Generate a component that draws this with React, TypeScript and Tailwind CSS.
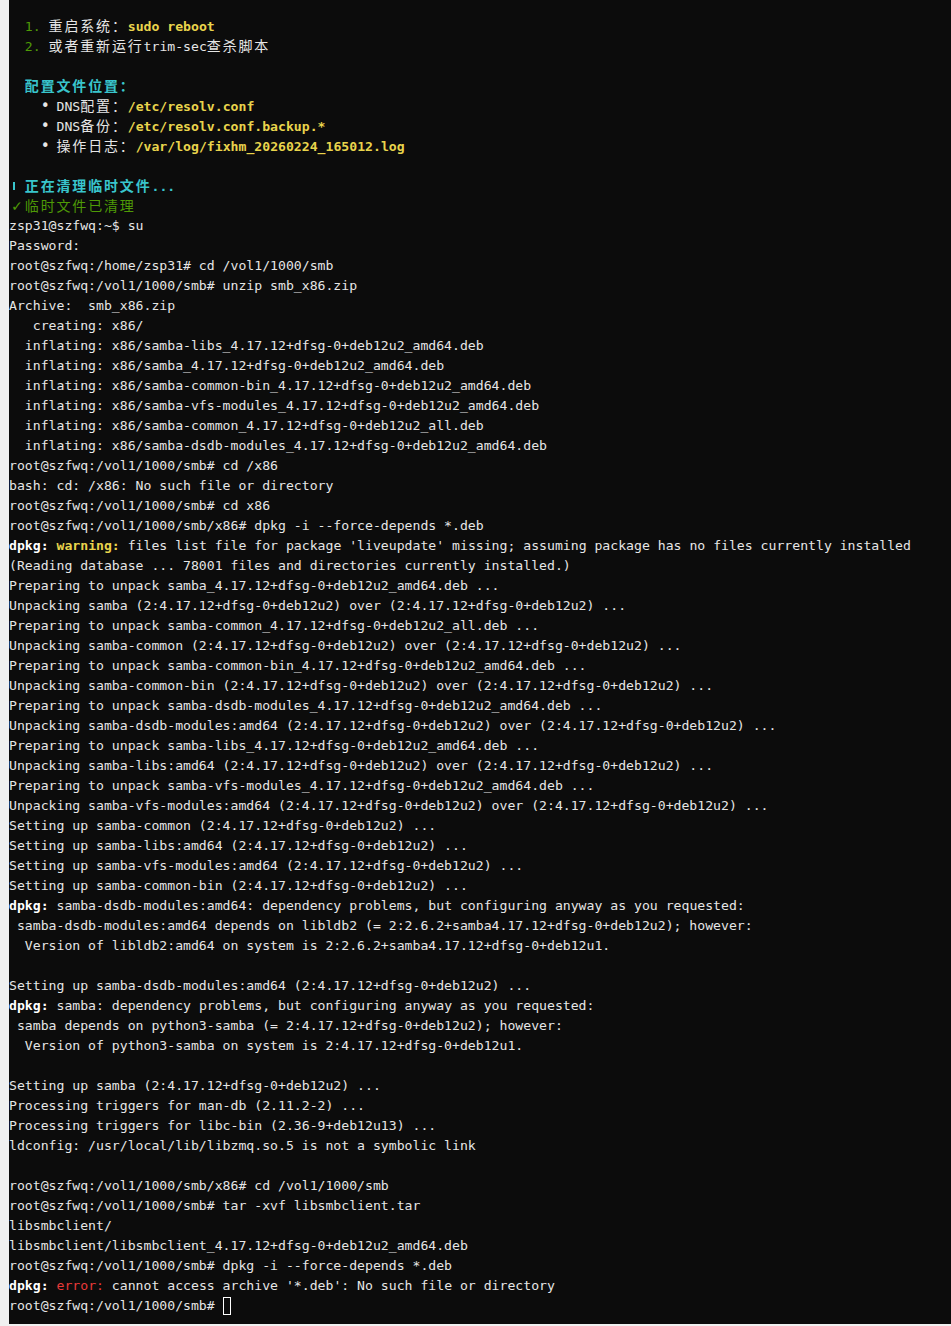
import React from 'react'

type Seg = [string, keyof typeof TONES] | string

const TONES = {
  n: '',
  g: 'text-[#4e9a06]',
  gk: 'text-[#4e9a06] text-[16px]',
  b: 'text-[15px]',
  y: 'font-bold text-[#e9d44c]',
  c: 'font-bold text-[#39c5cc]',
  w: 'font-bold text-white',
  r: 'text-[#e83a3a]',
  spin: '',
}

const V = '2:4.17.12+dfsg-0+deb12u2'

const LINES: Seg[][] = [
  ['  ', ['1.', 'g'], ' 重启系统：', ['sudo reboot', 'y']],
  ['  ', ['2.', 'g'], ' 或者重新运行trim-sec查杀脚本'],
  [],
  ['  ', ['配置文件位置：', 'c']],
  ['    ', ['•', 'b'], ' DNS配置：', ['/etc/resolv.conf', 'y']],
  ['    ', ['•', 'b'], ' DNS备份：', ['/etc/resolv.conf.backup.*', 'y']],
  ['    ', ['•', 'b'], ' 操作日志：', ['/var/log/fixhm_20260224_165012.log', 'y']],
  [],
  [['', 'spin'], ' ', ['正在清理临时文件...', 'c']],
  [['✓', 'gk'], ['临时文件已清理', 'g']],
  ['zsp31@szfwq:~$ su'],
  ['Password:'],
  ['root@szfwq:/home/zsp31# cd /vol1/1000/smb'],
  ['root@szfwq:/vol1/1000/smb# unzip smb_x86.zip'],
  ['Archive:  smb_x86.zip'],
  ['   creating: x86/'],
  ['  inflating: x86/samba-libs_4.17.12+dfsg-0+deb12u2_amd64.deb'],
  ['  inflating: x86/samba_4.17.12+dfsg-0+deb12u2_amd64.deb'],
  ['  inflating: x86/samba-common-bin_4.17.12+dfsg-0+deb12u2_amd64.deb'],
  ['  inflating: x86/samba-vfs-modules_4.17.12+dfsg-0+deb12u2_amd64.deb'],
  ['  inflating: x86/samba-common_4.17.12+dfsg-0+deb12u2_all.deb'],
  ['  inflating: x86/samba-dsdb-modules_4.17.12+dfsg-0+deb12u2_amd64.deb'],
  ['root@szfwq:/vol1/1000/smb# cd /x86'],
  ['bash: cd: /x86: No such file or directory'],
  ['root@szfwq:/vol1/1000/smb# cd x86'],
  ['root@szfwq:/vol1/1000/smb/x86# dpkg -i --force-depends *.deb'],
  [
    ['dpkg:', 'w'],
    ' ',
    ['warning:', 'y'],
    " files list file for package 'liveupdate' missing; assuming package has no files currently installed",
  ],
  ['(Reading database ... 78001 files and directories currently installed.)'],
  ['Preparing to unpack samba_4.17.12+dfsg-0+deb12u2_amd64.deb ...'],
  [`Unpacking samba (${V}) over (${V}) ...`],
  ['Preparing to unpack samba-common_4.17.12+dfsg-0+deb12u2_all.deb ...'],
  [`Unpacking samba-common (${V}) over (${V}) ...`],
  ['Preparing to unpack samba-common-bin_4.17.12+dfsg-0+deb12u2_amd64.deb ...'],
  [`Unpacking samba-common-bin (${V}) over (${V}) ...`],
  ['Preparing to unpack samba-dsdb-modules_4.17.12+dfsg-0+deb12u2_amd64.deb ...'],
  [`Unpacking samba-dsdb-modules:amd64 (${V}) over (${V}) ...`],
  ['Preparing to unpack samba-libs_4.17.12+dfsg-0+deb12u2_amd64.deb ...'],
  [`Unpacking samba-libs:amd64 (${V}) over (${V}) ...`],
  ['Preparing to unpack samba-vfs-modules_4.17.12+dfsg-0+deb12u2_amd64.deb ...'],
  [`Unpacking samba-vfs-modules:amd64 (${V}) over (${V}) ...`],
  [`Setting up samba-common (${V}) ...`],
  [`Setting up samba-libs:amd64 (${V}) ...`],
  [`Setting up samba-vfs-modules:amd64 (${V}) ...`],
  [`Setting up samba-common-bin (${V}) ...`],
  [['dpkg:', 'w'], ' samba-dsdb-modules:amd64: dependency problems, but configuring anyway as you requested:'],
  [' samba-dsdb-modules:amd64 depends on libldb2 (= 2:2.6.2+samba4.17.12+dfsg-0+deb12u2); however:'],
  ['  Version of libldb2:amd64 on system is 2:2.6.2+samba4.17.12+dfsg-0+deb12u1.'],
  [],
  [`Setting up samba-dsdb-modules:amd64 (${V}) ...`],
  [['dpkg:', 'w'], ' samba: dependency problems, but configuring anyway as you requested:'],
  [` samba depends on python3-samba (= ${V}); however:`],
  ['  Version of python3-samba on system is 2:4.17.12+dfsg-0+deb12u1.'],
  [],
  [`Setting up samba (${V}) ...`],
  ['Processing triggers for man-db (2.11.2-2) ...'],
  ['Processing triggers for libc-bin (2.36-9+deb12u13) ...'],
  ['ldconfig: /usr/local/lib/libzmq.so.5 is not a symbolic link'],
  [],
  ['root@szfwq:/vol1/1000/smb/x86# cd /vol1/1000/smb'],
  ['root@szfwq:/vol1/1000/smb# tar -xvf libsmbclient.tar'],
  ['libsmbclient/'],
  ['libsmbclient/libsmbclient_4.17.12+dfsg-0+deb12u2_amd64.deb'],
  ['root@szfwq:/vol1/1000/smb# dpkg -i --force-depends *.deb'],
  [['dpkg:', 'w'], ' ', ['error:', 'r'], " cannot access archive '*.deb': No such file or directory"],
]

// CJK glyphs take two terminal cells
function Cells({ text }: { text: string }) {
  const parts = text.split(/([\u3000-\u9fff\uff00-\uffef]+)/)
  return (
    <>
      {parts.map((p, i) =>
        i % 2 === 1 ? (
          <span key={i} className="text-[14px] tracking-[1.83px]">
            {p}
          </span>
        ) : (
          p
        ),
      )}
    </>
  )
}

function Line({ segs }: { segs: Seg[] }) {
  return (
    <div className="h-5 whitespace-pre overflow-hidden">
      {segs.map((s, i) => {
        if (typeof s === 'string') return <Cells key={i} text={s} />
        const [text, tone] = s
        if (tone === 'spin')
          return (
            <span key={i} className="inline-block w-[7.92px] h-5 align-top">
              <span className="block mt-[6px] ml-[4px] w-[2px] h-[8px] bg-[#39c5cc]" />
            </span>
          )
        if (tone === 'gk' || tone === 'b')
          return (
            <span key={i} className={`inline-block text-center align-top ${tone === 'gk' ? 'w-[15.83px]' : 'w-[7.92px]'} ${TONES[tone]}`}>
              {text}
            </span>
          )
        return (
          <span key={i} className={TONES[tone]}>
            <Cells text={text} />
          </span>
        )
      })}
    </div>
  )
}

export default function App() {
  return (
    <div className="w-[951px] h-[1326px] bg-[#f0f0f0] pl-[9px] pb-[2px]">
      <div
        className="h-full bg-[#0c0c0c] pt-[16px] text-[13.15px] leading-5 text-[#e6e6e6]"
        style={{ fontFamily: '"DejaVu Sans Mono", "Noto Sans CJK SC", monospace' }}
      >
        {LINES.map((segs, i) => (
          <Line key={i} segs={segs} />
        ))}
        <div className="h-5 whitespace-pre flex items-center">
          <span>root@szfwq:/vol1/1000/smb# </span>
          <span className="w-[8px] h-[18px] border border-white" />
        </div>
      </div>
    </div>
  )
}
